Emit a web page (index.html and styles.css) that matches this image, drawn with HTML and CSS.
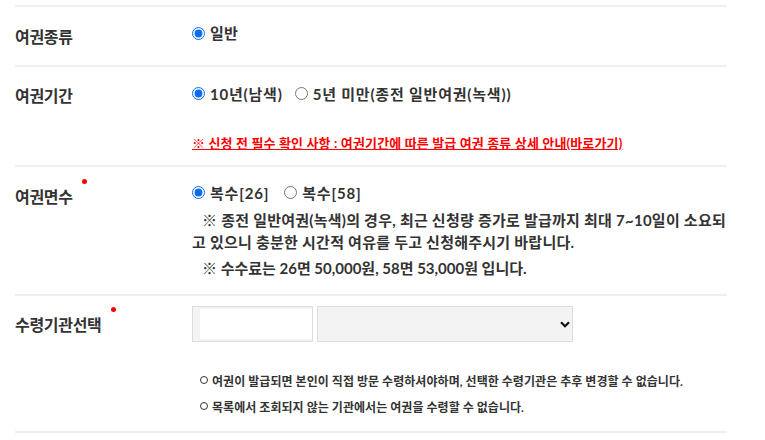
FILE: index.html
```html
<!DOCTYPE html>
<html lang="ko">
<head>
<meta charset="utf-8">
<link rel="stylesheet" href="styles.css">
</head>
<body>
<div class="form">
  <div class="row r1">
    <div class="label">여권종류</div>
    <div class="field">
      <label class="opt"><input type="radio" name="kind" checked><span>일반</span></label>
    </div>
  </div>
  <div class="row r2">
    <div class="label">여권기간</div>
    <div class="field">
      <div class="opts">
        <label class="opt"><input type="radio" name="period" checked><span>10년(남색)</span></label>
        <label class="opt"><input type="radio" name="period"><span>5년 미만(종전 일반여권(녹색))</span></label>
      </div>
      <a class="warn" href="#">※ 신청 전 필수 확인 사항 : 여권기간에 따른 발급 여권 종류 상세 안내(바로가기)</a>
    </div>
  </div>
  <div class="row r3">
    <div class="label">여권면수<span class="req"></span></div>
    <div class="field">
      <div class="opts wide">
        <label class="opt"><input type="radio" name="pages" checked><span>복수[26]</span></label>
        <label class="opt"><input type="radio" name="pages"><span>복수[58]</span></label>
      </div>
      <p class="note">※ 종전 일반여권(녹색)의 경우, 최근 신청량 증가로 발급까지 최대 7~10일이 소요되고 있으니 충분한 시간적 여유를 두고 신청해주시기 바랍니다.</p>
      <p class="note fee">※ 수수료는 26면 50,000원, 58면 53,000원 입니다.</p>
    </div>
  </div>
  <div class="row r4">
    <div class="label">수령기관선택<span class="req"></span></div>
    <div class="field">
      <div class="selects">
        <div class="sel sel1"><div class="mask"></div></div>
        <div class="sel sel2">
          <svg class="chev" width="10" height="7" viewBox="0 0 10 7"><path d="M1 1.2 L5 5.2 L9 1.2" fill="none" stroke="#111" stroke-width="2.2"/></svg>
        </div>
      </div>
      <ul class="info">
        <li>여권이 발급되면 본인이 직접 방문 수령하셔야하며, 선택한 수령기관은 추후 변경할 수 없습니다.</li>
        <li>목록에서 조회되지 않는 기관에서는 여권을 수령할 수 없습니다.</li>
      </ul>
    </div>
  </div>
</div>
</body>
</html>
```
FILE: styles.css
```css
* { box-sizing: border-box; }
body {
  margin: 0;
  background: #fff;
  font-family: Lato, "Noto Sans CJK KR", sans-serif;
  color: #333;
}
.form {
  margin-left: 15px;
  width: 712px;
  padding-top: 5px;
}
.row {
  display: flex;
  border-top: 2px solid #efefef;
}
.row.r4 { border-bottom: 2px solid #efefef; }
.label {
  width: 177px;
  flex: none;
  font-size: 16px;
  font-weight: 700;
  letter-spacing: -0.3px;
  line-height: 24px;
  color: #333;
  display: flex;
  align-items: flex-start;
}
.req {
  width: 5px;
  height: 5px;
  border-radius: 50%;
  background: #f00;
  margin-left: 9px;
  margin-top: -6px;
}
.field {
  flex: 1;
  font-size: 15px;
  font-weight: 700;
  letter-spacing: 0.25px;
  line-height: 24px;
}
.opts { display: flex; gap: 12px; letter-spacing: 0.8px; }
.opts.wide { gap: 15px; }
.opt { display: inline-flex; align-items: center; }
.opt input {
  margin: 0 5px 0 0;
  width: 13px;
  height: 13px;
  accent-color: #0a6cf5;
}
.r1 .label { padding-top: 18px; }
.r1 .field { padding: 14px 0 19px; }
.r2 .label { padding-top: 17px; }
.r2 .field { padding: 15px 0 10px; }
.warn {
  display: block;
  margin-top: 25px;
  color: #f00;
  font-size: 13px;
  letter-spacing: 0.15px;
  text-decoration: underline;
}
.r3 .label { padding-top: 18px; }
.r3 .field { padding: 14px 0 15px; }
.note {
  margin: 4px 0 0;
  line-height: 22px;
  text-indent: 10px;
}
.note.fee { letter-spacing: 0; }
.r4 .label { padding-top: 17px; }
.r4 .field { padding: 10px 0 10px; }
.selects { display: flex; gap: 4px; }
.sel {
  height: 36px;
  background: #f3f3f3;
  border: 1px solid #ddd;
  position: relative;
}
.sel1 { width: 121px; padding: 2px 0 2px 7px; }
.mask { background: #fff; height: 100%; }
.sel2 { width: 256px; }
.chev { position: absolute; right: 2px; top: 14px; }
.info {
  list-style: none;
  margin: 27px 0 0;
  padding: 0 0 0 8px;
  font-size: 12px;
  letter-spacing: 0.05px;
  line-height: 26px;
  color: #333;
}
.info li::before {
  content: "";
  display: inline-block;
  width: 6px;
  height: 6px;
  border: 1.5px solid #333;
  border-radius: 50%;
  margin-right: 4px;
  vertical-align: 2px;
}
```
